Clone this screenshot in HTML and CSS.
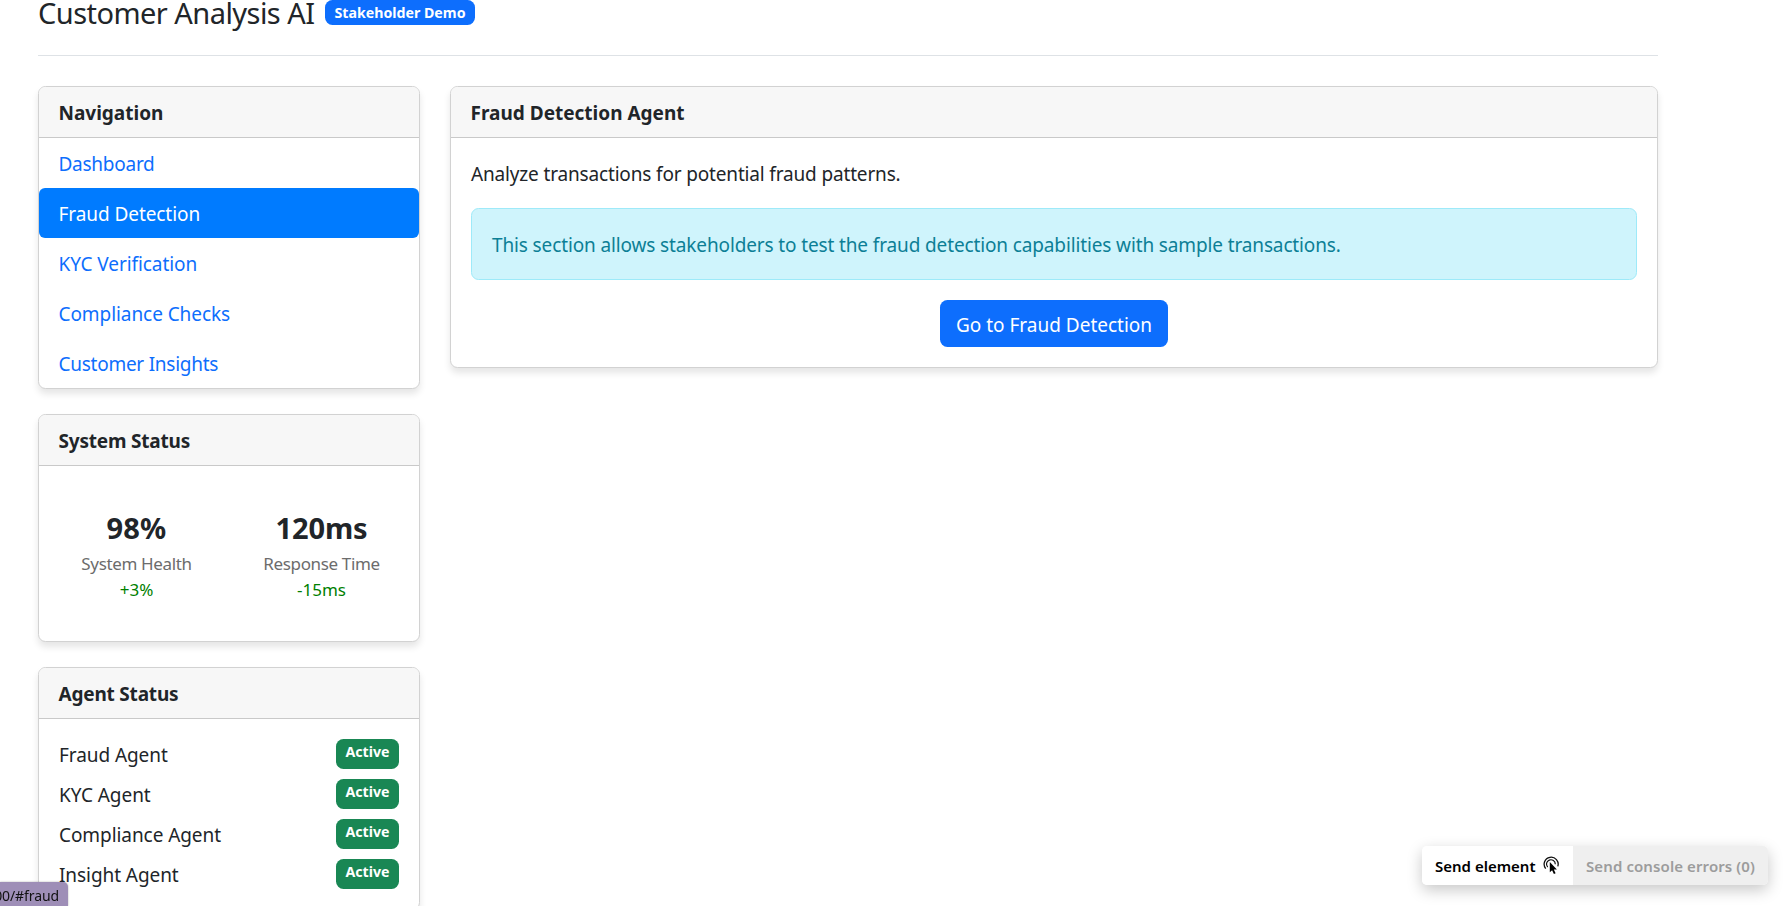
FILE: index.html
```html
<!DOCTYPE html>
<html lang="en">
<head>
<meta charset="utf-8">
<title>Customer Analysis AI</title>
<link rel="stylesheet" href="styles.css">
</head>
<body>
<div class="page">
  <header class="topbar">
    <h1 class="title">Customer Analysis AI</h1>
    <span class="badge badge-primary">Stakeholder Demo</span>
  </header>
  <div class="layout">
    <aside class="sidebar">
      <section class="card">
        <h2 class="card-header">Navigation</h2>
        <nav class="nav">
          <a class="nav-link nav-dashboard" href="#dashboard">Dashboard</a>
          <a class="nav-link active" href="#fraud">Fraud Detection</a>
          <a class="nav-link" href="#kyc">KYC Verification</a>
          <a class="nav-link" href="#compliance">Compliance Checks</a>
          <a class="nav-link nav-insights" href="#insights">Customer Insights</a>
        </nav>
      </section>
      <section class="card">
        <h2 class="card-header header-tight">System Status</h2>
        <div class="metrics">
          <div class="metric">
            <div class="metric-value">98%</div>
            <div class="metric-label">System Health</div>
            <div class="metric-change">+3%</div>
          </div>
          <div class="metric">
            <div class="metric-value metric-ms">120ms</div>
            <div class="metric-label">Response Time</div>
            <div class="metric-change">-15ms</div>
          </div>
        </div>
      </section>
      <section class="card">
        <h2 class="card-header header-tight">Agent Status</h2>
        <div class="agents">
          <div class="agent"><span>Fraud Agent</span><span class="badge badge-success">Active</span></div>
          <div class="agent"><span>KYC Agent</span><span class="badge badge-success">Active</span></div>
          <div class="agent"><span>Compliance Agent</span><span class="badge badge-success">Active</span></div>
          <div class="agent"><span>Insight Agent</span><span class="badge badge-success">Active</span></div>
        </div>
      </section>
    </aside>
    <main class="main">
      <section class="card">
        <h2 class="card-header">Fraud Detection Agent</h2>
        <div class="card-body">
          <p class="lead">Analyze transactions for potential fraud patterns.</p>
          <div class="alert">This section allows stakeholders to test the fraud detection capabilities with sample transactions.</div>
          <button class="btn">Go to Fraud Detection</button>
        </div>
      </section>
    </main>
  </div>
</div>
<div class="link-status"><span>00/#fraud</span></div>
<div class="toolbar">
  <button class="tool tool-element"><span class="tool-label">Send element</span>
    <svg class="pick" viewBox="0 0 18 20" width="18" height="20" fill="none" stroke="#111">
      <path d="M2.7 13.6A7 7 0 1 1 14.8 11.4" stroke-width="1.3"/>
      <path d="M4.7 12.2A4.4 4.4 0 1 1 12.3 9.2" stroke-width="1.2"/>
      <path d="M6.8 7v10.2l2.3-2 1.8 3.9 1.7-.8-1.8-3.7h3.1z" fill="#000" stroke="none"/>
    </svg>
  </button>
  <button class="tool tool-errors" disabled><span>Send console errors (0)</span></button>
</div>
</body>
</html>
```

FILE: styles.css
```css
* { box-sizing: border-box; }
html, body { height: 100%; }
body {
  margin: 0;
  overflow: hidden;
  background: #fff;
  color: #212529;
  font: 19px/30px "Noto Sans", "Open Sans", sans-serif;
}
h1, h2, p { margin: 0; font: inherit; }
button { border: 0; font: inherit; margin: 0; }
span { white-space: nowrap; }
.page { width: 1620px; margin-left: 38px; }
.topbar {
  display: flex;
  align-items: flex-start;
  gap: 11px;
  height: 56px;
  border-bottom: 1px solid #dee2e6;
}
.title { font-size: 29px; line-height: 26px; width: 276px; letter-spacing: -.54px; white-space: nowrap; }
.badge {
  border-radius: 7.5px;
  color: #fff;
  font-size: 14.2px;
  font-weight: 700;
  text-align: center;
}
.badge-primary { width: 150px; height: 25px; line-height: 26px; background: #0d6efd; }
.badge-success { width: 63px; height: 30px; line-height: 26px; background: #198754; }
.layout { display: flex; gap: 30px; padding-top: 30px; }
.sidebar { width: 382px; display: flex; flex-direction: column; gap: 25px; flex: none; }
.main { flex: 1; min-width: 0; }
.card {
  border: 1px solid #d2d2d2;
  border-radius: 7.5px;
  background: #fff;
  box-shadow: 0 5px 7.5px rgba(0, 0, 0, .1);
}
.card-header {
  height: 51px;
  padding: 0 19.5px;
  line-height: 52px;
  font-weight: 700;
  background: #f7f7f7;
  border-bottom: 1px solid #c9c9c9;
  border-radius: 6.5px 6.5px 0 0;
}
.header-tight { letter-spacing: -.2px; }
.nav { display: flex; flex-direction: column; }
.nav-link {
  height: 50px;
  padding: 0 19.5px;
  line-height: 52px;
  letter-spacing: -.07px;
  color: #0d6efd;
  text-decoration: none;
  border-radius: 6px;
}
.nav-dashboard, .nav-insights { letter-spacing: -.26px; }
.nav-link.active { background: #007bff; color: #fff; }
.metrics { display: flex; justify-content: space-around; height: 175px; padding: 39px 5px 0; }
.metric { width: 186px; text-align: center; }
.metric-value { font-size: 29px; font-weight: 700; line-height: 45px; letter-spacing: .2px; }
.metric-ms { letter-spacing: -.1px; }
.metric-label { margin-top: 1px; font-size: 17px; line-height: 26px; letter-spacing: -.36px; color: #6c6c6c; }
.metric-change { font-size: 17px; line-height: 26px; color: green; }
.agents { display: flex; flex-direction: column; gap: 10px; padding: 20px; }
.agent { display: flex; justify-content: space-between; height: 30px; line-height: 32px; letter-spacing: -.07px; }
.agent .badge { line-height: 26px; letter-spacing: 0; }
.card-body { display: flex; flex-direction: column; align-items: center; height: 229px; padding: 20px; }
.lead { align-self: stretch; height: 50px; line-height: 32px; letter-spacing: -.16px; }
.alert {
  align-self: stretch;
  height: 72px;
  margin-bottom: 20px;
  padding: 0 20px;
  line-height: 72px;
  letter-spacing: -.13px;
  color: #0c7f96;
  background: #cff4fc;
  border: 1px solid #9eeaf9;
  border-radius: 7.5px;
}
.btn { width: 228px; height: 47px; padding: 3px 0 0; line-height: 44px; color: #fff; background: #0d6efd; border-radius: 7.5px; }
.link-status {
  position: fixed;
  left: 0;
  bottom: 0;
  width: 68px;
  height: 24px;
  display: flex;
  justify-content: flex-end;
  padding-right: 9px;
  overflow: hidden;
  border-top-right-radius: 5px;
  background: #9e8eb7;
  box-shadow: 0 0 2px rgba(0, 0, 0, .35);
  color: #111;
  font-size: 14px;
  line-height: 27px;
  letter-spacing: -.1px;
}
.toolbar {
  position: fixed;
  left: 1422px;
  top: 846px;
  width: 346px;
  height: 39px;
  display: flex;
  border-radius: 5px;
  overflow: hidden;
  background: #fff;
  box-shadow: 0 5px 15px rgba(0, 0, 0, .22);
  font-size: 15px;
  font-weight: 600;
}
.tool { display: flex; align-items: center; height: 39px; padding: 1px 13px 0; line-height: 38px; }
.tool-element { width: 151px; background: #fff; color: #000; gap: 7px; }
.tool-label { width: 101px; }
.tool-errors { width: 195px; background: #efefef; color: #9c9c9c; letter-spacing: .1px; }
.pick { flex: none; margin-bottom: 3px; }
```
